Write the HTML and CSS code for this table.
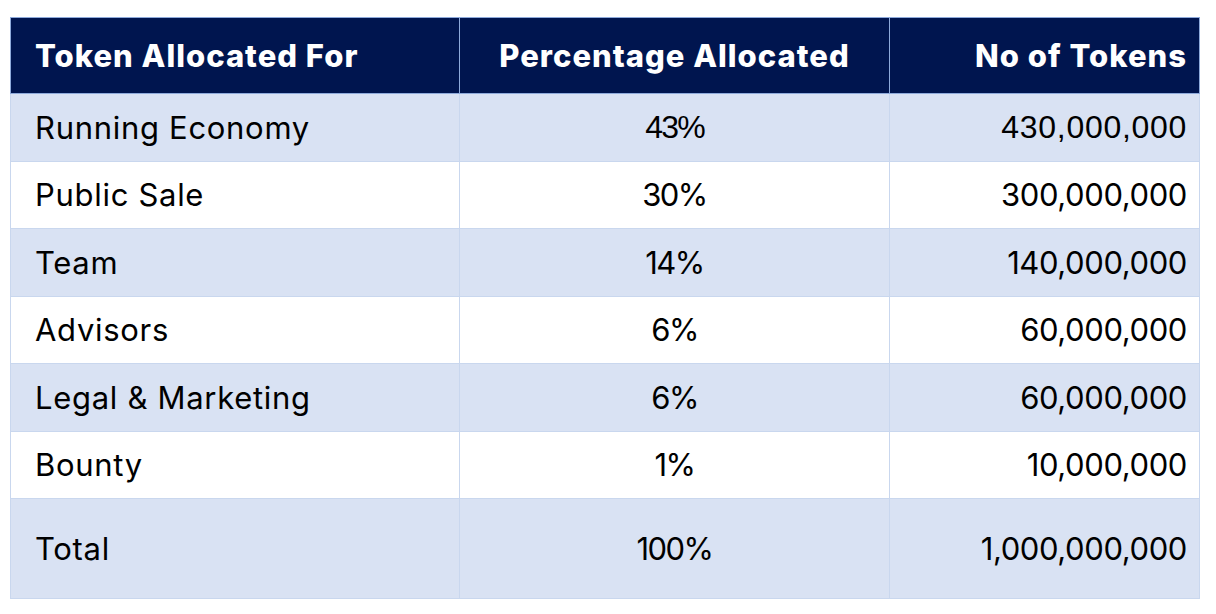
FILE: index.html
```html
<!DOCTYPE html>
<html>
<head>
<meta charset="utf-8">
<link rel="stylesheet" href="styles.css">
</head>
<body>
<table class="alloc">
  <colgroup>
    <col class="c1">
    <col class="c2">
    <col class="c3">
  </colgroup>
  <thead>
    <tr>
      <th class="left">Token Allocated For</th>
      <th class="center">Percentage Allocated</th>
      <th class="right">No of Tokens</th>
    </tr>
  </thead>
  <tbody>
    <tr class="shade">
      <td class="left">Running Economy</td>
      <td class="center arial pct-a">43%</td>
      <td class="right arial num-a">430,000,000</td>
    </tr>
    <tr>
      <td class="left">Public Sale</td>
      <td class="center pct">30%</td>
      <td class="right num">300,000,000</td>
    </tr>
    <tr class="shade">
      <td class="left">Team</td>
      <td class="center pct">14%</td>
      <td class="right num">140,000,000</td>
    </tr>
    <tr>
      <td class="left">Advisors</td>
      <td class="center pct">6%</td>
      <td class="right num">60,000,000</td>
    </tr>
    <tr class="shade">
      <td class="left">Legal &amp; Marketing</td>
      <td class="center pct">6%</td>
      <td class="right num">60,000,000</td>
    </tr>
    <tr>
      <td class="left">Bounty</td>
      <td class="center pct">1%</td>
      <td class="right num">10,000,000</td>
    </tr>
    <tr class="shade total">
      <td class="left">Total</td>
      <td class="center pct">100%</td>
      <td class="right num">1,000,000,000</td>
    </tr>
  </tbody>
</table>
</body>
</html>
```

FILE: styles.css
```css
html, body {
  margin: 0;
  padding: 0;
  background: #ffffff;
}

body {
  padding: 17px 0 0 10px;
  font-family: "Inter", "Liberation Sans", sans-serif;
  color: #000000;
}

.alloc {
  border-collapse: collapse;
  table-layout: fixed;
  width: 1189px;
}

.c1 { width: 449px; }
.c2 { width: 430px; }
.c3 { width: 310px; }

.alloc th,
.alloc td {
  padding: 0;
  white-space: nowrap;
}

.alloc th {
  height: 75px;
  background: #00154f;
  color: #ffffff;
  font-weight: 800;
  font-size: 31px;
  letter-spacing: 1px;
  border: 1px solid #8eaadb;
}

.alloc td {
  height: 66.5px;
  font-size: 31px;
  font-weight: 400;
  letter-spacing: 0.7px;
  border: 1px solid #c9d7ee;
}

.alloc .shade td {
  background: #d9e2f3;
}

.alloc .total td {
  height: 99px;
}

.left {
  text-align: left;
  padding-left: 24px !important;
}

.center {
  text-align: center;
}

.right {
  text-align: right;
  padding-right: 12px !important;
}

.alloc td.pct {
  letter-spacing: -1.6px;
}

.alloc td.num {
  letter-spacing: -0.4px;
}

.alloc td.arial {
  font-family: "Liberation Sans", Arial, sans-serif;
  font-size: 32px;
}

.alloc td.pct-a {
  letter-spacing: -1.8px;
}

.alloc td.num-a {
  letter-spacing: 0.7px;
}
```
